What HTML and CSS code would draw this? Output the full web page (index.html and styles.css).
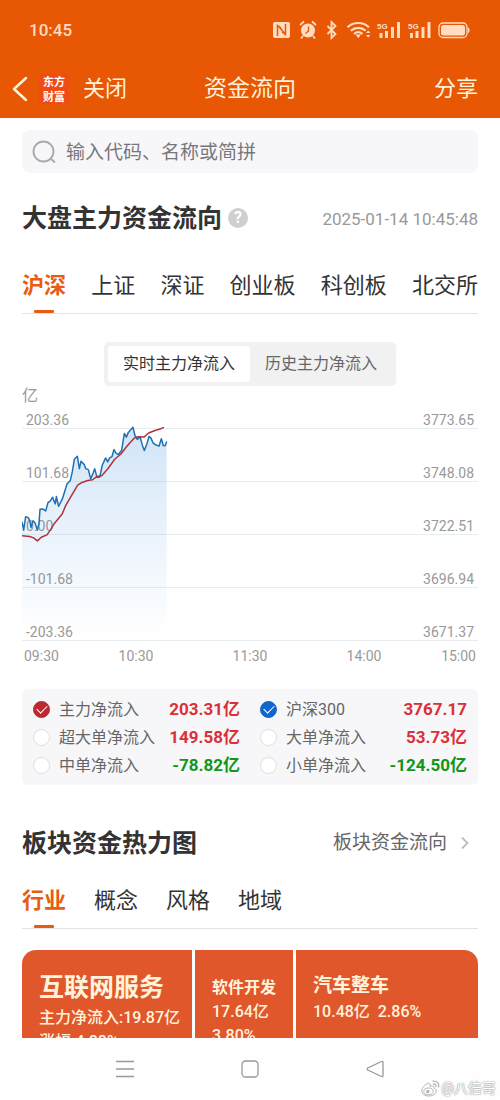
FILE: index.html
```html
<!DOCTYPE html>
<html lang="zh-CN">
<head>
<meta charset="utf-8">
<meta name="viewport" content="width=device-width, initial-scale=1">
<title>资金流向</title>
<link rel="stylesheet" href="styles.css">
</head>
<body>
<div class="app">
  <header class="header">
    <div class="status">
      <span class="status-time">10:45</span>
      <svg class="status-icons" width="200" height="20" viewBox="0 0 200 20" aria-hidden="true">
        <rect x="3" y="2" width="17" height="16" rx="2" fill="#ffdcc2"/>
        <path d="M7.500 16V5.500l3.500 2.500M15.500 4v10.500l-3.500-2.500M8.500 6l6.500 8" fill="none" stroke="#e85703" stroke-width="1.500"/>
        <circle cx="38" cy="10.500" r="7" fill="#ffdcc2"/>
        <path d="M30 5l4-3.500M46 5l-4-3.500M33 16l-2 2.500M43 16l2 2.500" stroke="#ffdcc2" stroke-width="1.800" fill="none"/>
        <path d="M38.500 6.500v4.500l-3 2.500" stroke="#e85703" stroke-width="1.400" fill="none"/>
        <path d="M57.500 6l8 8-4 4V2l4 4-8 8" stroke="#ffdcc2" stroke-width="1.800" fill="none"/>
        <g fill="none" stroke="#ffdcc2" stroke-width="2.200">
          <path d="M77.500 7.200c6.200-5.600 15.300-5.600 21.500 0"/>
          <path d="M80.800 10.800c4.400-3.900 10.500-3.900 14.900 0"/>
          <path d="M84 14c2.600-2.200 5.900-2.200 8.500 0"/>
        </g>
        <path d="M85.500 14.500h5.500l-2.700 3.700zM96 13l2.200-2.600 2.200 2.600zM96 15l2.200 2.600 2.200-2.600z" fill="#ffdcc2"/>
        <g fill="#ffdcc2">
          <text class="net-label" x="107" y="9">5G</text>
          <path d="M109.500 13h3v5h-3zM115 11h3v7h-3zM121 7h3v11h-3zM127 2h3v16h-3z"/>
          <text class="net-label" x="138" y="9">5G</text>
          <path d="M140 13h3v5h-3zM145.500 11h3v7h-3zM151.500 7h3v11h-3zM157.500 2h3v16h-3z"/>
        </g>
        <rect x="169" y="3" width="28" height="14.500" rx="4" fill="none" stroke="#ffdcc2" stroke-width="1.300"/>
        <rect x="171" y="5" width="24" height="10.500" rx="2.500" fill="#ffdcc2"/>
        <path d="M198 7.500c2 .5 2 5 0 5.500z" fill="#ffdcc2"/>
      </svg>
    </div>
    <nav class="topnav">
      <div class="topnav-left">
        <button class="icon-button" type="button" aria-label="返回">
          <svg width="16" height="26" viewBox="0 0 16 26" aria-hidden="true"><path d="M14 2L2 13l12 11" fill="none" stroke="#fff3dc" stroke-width="2.500" stroke-linecap="round" stroke-linejoin="round"/></svg>
        </button>
        <span class="logo">东方<br>财富</span>
        <button class="text-button" type="button">关闭</button>
      </div>
      <h1 class="topnav-title">资金流向</h1>
      <button class="text-button share" type="button">分享</button>
    </nav>
  </header>

  <main class="content">
    <label class="search">
      <svg width="24" height="24" viewBox="0 0 24 24" aria-hidden="true"><g fill="none" stroke="#a9a9ae" stroke-width="1.900" stroke-linecap="round"><circle cx="11.500" cy="11.500" r="10"/><path d="M19 19l3.500 3"/></g></svg>
      <input class="search-input" type="text" placeholder="输入代码、名称或简拼" aria-label="搜索">
    </label>

    <div class="section-head first">
      <h2 class="section-title">大盘主力资金流向</h2>
      <button class="help" type="button" aria-label="说明">?</button>
      <time class="timestamp">2025-01-14 10:45:48</time>
    </div>

    <div class="tabs market-tabs">
      <button class="tab active" type="button">沪深</button>
      <button class="tab" type="button">上证</button>
      <button class="tab" type="button">深证</button>
      <button class="tab" type="button">创业板</button>
      <button class="tab" type="button">科创板</button>
      <button class="tab" type="button">北交所</button>
    </div>

    <div class="segment">
      <button class="segment-item active" type="button">实时主力净流入</button>
      <button class="segment-item" type="button">历史主力净流入</button>
    </div>

    <div class="chart">
      <div class="chart-unit">亿</div>
      <div class="plot">
        <div class="plot-row"><span>203.36</span><span>3773.65</span></div>
        <div class="plot-row"><span>101.68</span><span>3748.08</span></div>
        <div class="plot-row"><span>0.00</span><span>3722.51</span></div>
        <div class="plot-row"><span>-101.68</span><span>3696.94</span></div>
        <div class="plot-row"><span>-203.36</span><span>3671.37</span></div>
        <svg class="plot-lines" viewBox="66 318 1368 640" preserveAspectRatio="none" aria-hidden="true">
          <defs>
            <linearGradient id="area" x1="0" y1="0" x2="0" y2="1">
              <stop offset="0" stop-color="#2d86dc" stop-opacity=".22"/>
              <stop offset=".5" stop-color="#2d86dc" stop-opacity=".1"/>
              <stop offset="1" stop-color="#2d86dc" stop-opacity="0"/>
            </linearGradient>
          </defs>
          <path fill="url(#area)" d="M66 603L71 628 77 588 84 590 89 599 93 620 99 600 105 606 112 628 117 608 120 566 128 565 137 571 144 546 151 541 158 530 162 541 166 550 169 528 176 557 187 535 195 510 201 491 211 480 217 454 223 417 232 408 238 445 243 423 253 433 257 445 265 448 272 475 278 462 284 445 291 471 299 470 307 434 317 413 323 425 329 413 336 409 342 388 348 399 355 403 365 390 373 340 379 351 385 337 394 327 399 322 405 347 412 358 420 350 428 378 433 391 441 370 447 349 453 354 459 368 467 374 477 378 484 356 490 377 496 376 500 364V950H66z"/>
          <path class="line index" d="M66 603L71 628 77 588 84 590 89 599 93 620 99 600 105 606 112 628 117 608 120 566 128 565 137 571 144 546 151 541 158 530 162 541 166 550 169 528 176 557 187 535 195 510 201 491 211 480 217 454 223 417 232 408 238 445 243 423 253 433 257 445 265 448 272 475 278 462 284 445 291 471 299 470 307 434 317 413 323 425 329 413 336 409 342 388 348 399 355 403 365 390 373 340 379 351 385 337 394 327 399 322 405 347 412 358 420 350 428 378 433 391 441 370 447 349 453 354 459 368 467 374 477 378 484 356 490 377 496 376 500 364"/>
          <path class="line main" d="M66 645L89 647 101 651 112 660 124 649 141 642 151 628 163 608 186 581 197 555 214 526 233 494 246 486 263 480 278 478 291 468 305 466 323 446 344 417 362 402 382 377 403 354 414 350 432 351 446 339 463 332 482 326 492 322"/>
        </svg>
      </div>
      <div class="axis"><span>09:30</span><span>10:30</span><span>11:30</span><span>14:00</span><span>15:00</span></div>
    </div>

    <div class="legend">
      <label class="legend-item"><input class="check red" type="checkbox" checked><span>主力净流入</span><b class="up">203.31亿</b></label>
      <label class="legend-item"><input class="check blue" type="checkbox" checked><span>沪深300</span><b class="up">3767.17</b></label>
      <label class="legend-item"><input class="check" type="checkbox"><span>超大单净流入</span><b class="up">149.58亿</b></label>
      <label class="legend-item"><input class="check" type="checkbox"><span>大单净流入</span><b class="up">53.73亿</b></label>
      <label class="legend-item"><input class="check" type="checkbox"><span>中单净流入</span><b class="down">-78.82亿</b></label>
      <label class="legend-item"><input class="check" type="checkbox"><span>小单净流入</span><b class="down">-124.50亿</b></label>
    </div>

    <div class="section-head second">
      <h2 class="section-title">板块资金热力图</h2>
      <a class="more" href="#">板块资金流向
        <svg width="10" height="14" viewBox="0 0 10 14" aria-hidden="true"><path d="M2 1.500L7.500 7 2 12.500" fill="none" stroke="#bdbdbd" stroke-width="1.800"/></svg>
      </a>
    </div>

    <div class="tabs sector-tabs">
      <button class="tab active" type="button">行业</button>
      <button class="tab" type="button">概念</button>
      <button class="tab" type="button">风格</button>
      <button class="tab" type="button">地域</button>
    </div>

    <div class="heatmap">
      <div class="tile large"><strong>互联网服务</strong><span>主力净流入:19.87亿</span><span>涨幅:4.88%</span></div>
      <div class="tile small"><strong>软件开发</strong><span>17.64亿</span><span>3.80%</span></div>
      <div class="tile medium"><strong>汽车整车</strong><span>10.48亿&nbsp; 2.86%</span></div>
    </div>
  </main>

  <footer class="sysnav">
    <button class="icon-button" type="button" aria-label="任务"><svg width="18" height="18" viewBox="0 0 18 18"><path d="M0 1.500h18M0 9h18M0 16.500h18" stroke="#999" stroke-width="1.300"/></svg></button>
    <button class="icon-button" type="button" aria-label="主页"><svg width="18" height="18" viewBox="0 0 18 18"><rect x="1" y="1" width="16" height="16" rx="3.500" fill="none" stroke="#999" stroke-width="1.300"/></svg></button>
    <button class="icon-button" type="button" aria-label="后退"><svg width="18" height="18" viewBox="0 0 18 18"><path d="M15.500 1.500Q17 1 17 2.500v13q0 1.500-1.500 1L1.800 10q-1.300-1 0-2z" fill="none" stroke="#999" stroke-width="1.300"/></svg></button>
    <span class="watermark">
      <svg width="19" height="17" viewBox="0 0 19 17" aria-hidden="true"><g fill="#fff" stroke="#b5b5b5" stroke-width="1"><path d="M7.500 3.200C4 4 .8 8 .8 11c0 3 3.200 5 7 5 4.500 0 7.400-2.500 7.400-5 0-1.700-1.200-2.500-2.400-2.800.7-2-.5-3-3.800-1.800.5-2-.1-3.200-1.500-3.200z"/><ellipse cx="7.500" cy="11.300" rx="4.700" ry="3.300"/></g><circle cx="6.800" cy="11.500" r="1.800" fill="#b5b5b5"/><path d="M12 1.200c3.600-.8 6.500 2 5.500 5.800M12.500 4c1.700-.3 2.800.8 2.400 2.500" fill="none" stroke="#b5b5b5" stroke-width="1.300" stroke-linecap="round"/></svg>
      @八倍哥
    </span>
  </footer>
</div>
</body>
</html>
```
FILE: styles.css
```css
* {
  box-sizing: border-box;
}

body {
  margin: 0;
  background: #fff;
  color: #333;
  font-family: Roboto, "Noto Sans CJK SC", sans-serif;
  font-size: 16px;
}

button,
input {
  margin: 0;
  padding: 0;
  border: 0;
  background: none;
  color: inherit;
  font: inherit;
}

h1,
h2 {
  margin: 0;
}

svg {
  display: block;
}

.app {
  display: flex;
  flex-direction: column;
  height: 100vh;
}

/* Header */
.header {
  flex: none;
  background: #e85703;
  color: #fff3dc;
}

.status {
  display: flex;
  align-items: center;
  justify-content: space-between;
  height: 60px;
  padding: 0 30px 0 29px;
}

.status-time {
  color: #ffdcc2;
  font-size: 17px;
  font-weight: 500;
}

.net-label {
  font-family: "Liberation Sans", sans-serif;
  font-size: 8px;
  font-weight: 700;
}

.topnav {
  display: grid;
  grid-template-columns: 1fr auto 1fr;
  align-items: center;
  height: 58px;
}

.topnav-left {
  display: flex;
  align-items: center;
  padding-left: 12px;
}

.icon-button {
  display: flex;
}

.logo {
  width: 30px;
  margin: 0 14px 0 11px;
  border-radius: 4px;
  background: #f04a16;
  color: #fff;
  font-family: "Noto Sans CJK SC", sans-serif;
  font-size: 11px;
  font-weight: 700;
  line-height: 15px;
  text-align: center;
}

.topnav-title {
  font-size: 23px;
  font-weight: 400;
  line-height: 32px;
}

.text-button {
  font-size: 22px;
  line-height: 32px;
}

.share {
  justify-self: end;
  padding-right: 22px;
}

/* Content */
.content {
  display: flex;
  flex: 1;
  flex-direction: column;
  min-height: 0;
  padding: 12px 22px 0;
  overflow: hidden;
}

.content > * {
  flex: none;
}

.search {
  display: flex;
  align-items: center;
  gap: 10px;
  height: 43px;
  padding: 0 10px;
  border-radius: 8px;
  background: #f7f7fa;
}

.search-input {
  flex: 1;
  min-width: 0;
  padding-top: 2px;
  font-size: 19px;
  outline: 0;
}

.search-input::placeholder {
  color: #77777b;
}

.section-head {
  display: flex;
  align-items: center;
  height: 36px;
}

.section-head.first {
  margin-top: 27px;
}

.section-head.second {
  margin-top: 40px;
}

.section-title {
  padding-top: 2px;
  font-size: 25px;
  font-weight: 700;
  line-height: 36px;
}

.help {
  width: 20px;
  height: 20px;
  margin-left: 6px;
  border-radius: 50%;
  background: #cfcfcf;
  color: #fff;
  font-size: 16px;
  font-weight: 700;
  line-height: 20px;
}

.timestamp {
  margin-left: auto;
  padding-top: 2px;
  color: #999;
  font-size: 17px;
}

.more {
  display: flex;
  align-items: center;
  gap: 13px;
  margin-left: auto;
  padding-right: 8px;
  color: #666;
  font-size: 19px;
  line-height: 32px;
  text-decoration: none;
}

.tabs {
  display: flex;
  border-bottom: 1px solid #e3e3e3;
}

.market-tabs {
  justify-content: space-between;
  margin-top: 35px;
}

.sector-tabs {
  gap: 28px;
  margin-top: 25px;
}

.tab {
  position: relative;
  padding: 1px 0 13px;
  font-size: 22px;
  line-height: 28px;
}

.tab.active {
  color: #e85c12;
  font-weight: 700;
}

.tab.active::after {
  content: "";
  position: absolute;
  bottom: 0;
  left: 50%;
  width: 20px;
  height: 3px;
  margin-left: -10px;
  border-radius: 1px;
  background: #e85c12;
}

.segment {
  display: flex;
  align-self: center;
  margin-top: 28px;
  padding: 4px;
  border-radius: 5px;
  background: #f1f1f1;
}

.segment-item {
  height: 36px;
  padding: 0 15px;
  border-radius: 3px;
  color: #666;
  font-size: 16px;
  line-height: 34px;
}

.segment-item.active {
  background: #fff;
  color: #333;
}

/* Chart */
.chart {
  color: #999;
  font-size: 14px;
  line-height: 16px;
}

.chart-unit {
  font-size: 16px;
  line-height: 20px;
}

.plot {
  position: relative;
}

.plot-row {
  display: flex;
  align-items: flex-end;
  justify-content: space-between;
  height: 53px;
  padding: 0 4px;
  border-bottom: 1px solid #e9ecee;
}

.plot-row:first-child {
  height: 23px;
}

.plot-lines {
  position: absolute;
  top: 20px;
  left: 0;
  width: 100%;
  height: calc(100% - 20px);
}

.line {
  fill: none;
  stroke-width: 1.5px;
  stroke-linejoin: round;
  vector-effect: non-scaling-stroke;
}

.line.index {
  stroke: #1f70b5;
}

.line.main {
  stroke: #b2323c;
}

.axis {
  display: grid;
  grid-template-columns: 1fr 2fr 2fr 2fr 1fr;
  padding: 7px 0 8px;
  text-align: center;
}

.axis span:first-child {
  padding-left: 2px;
  text-align: left;
}

.axis span:last-child {
  padding-right: 2px;
  text-align: right;
}

/* Legend */
.legend {
  display: grid;
  grid-template-columns: 1fr 1fr;
  column-gap: 20px;
  margin-top: 17px;
  padding: 6px 11px;
  border-radius: 6px;
  background: #f7f7f9;
}

.legend-item {
  display: flex;
  align-items: center;
  height: 28px;
  color: #666;
  line-height: 28px;
}

.legend-item span {
  padding-top: 2px;
}

.legend-item b {
  margin-left: auto;
  font-size: 17px;
}

.up {
  color: #dc3038;
}

.down {
  color: #109618;
}

.check {
  position: relative;
  width: 17px;
  height: 17px;
  margin-right: 9px;
  border: 1px solid #dedede;
  border-radius: 50%;
  background: #fff;
  appearance: none;
}

.check.red:checked {
  border-color: #bd2930;
  background: #bd2930;
}

.check.blue:checked {
  border-color: #1266cb;
  background: #1266cb;
}

.check:checked::after {
  content: "";
  position: absolute;
  top: 3px;
  left: 3px;
  width: 9px;
  height: 5px;
  border: solid #fff;
  border-width: 0 0 1px 1px;
  transform: rotate(-45deg);
}

/* Heat map */
.heatmap {
  display: grid;
  grid-template-columns: 170fr 98fr 182fr;
  gap: 3px;
  height: 240px;
  margin-top: 21px;
  border-radius: 14px;
  overflow: hidden;
}

.tile {
  display: flex;
  flex-direction: column;
  padding: 24px 0 0 17px;
  background: #e1572c;
  color: #fff3dc;
  font-weight: 500;
  line-height: 24px;
  white-space: nowrap;
}

.tile strong {
  font-weight: 700;
}

.tile.large strong {
  margin-bottom: 4px;
  font-size: 25px;
  line-height: 28px;
}

.tile.small {
  padding-top: 26px;
}

.tile.medium strong {
  margin-bottom: 2px;
  font-size: 19px;
}

/* System bar */
.sysnav {
  position: relative;
  display: grid;
  flex: none;
  grid-template-columns: 1fr 2fr 2fr 2fr 1fr;
  align-items: center;
  height: 62px;
  background: #fefefe;
}

.sysnav .icon-button {
  justify-self: center;
}

.sysnav .icon-button:first-child {
  grid-column: 2;
}

.watermark {
  position: absolute;
  right: 4px;
  bottom: 2px;
  display: flex;
  align-items: center;
  gap: 1px;
  color: #fff;
  font-size: 14px;
  line-height: 20px;
  text-shadow: 0 0 1px #888, 0 0 2px #999;
}
```
